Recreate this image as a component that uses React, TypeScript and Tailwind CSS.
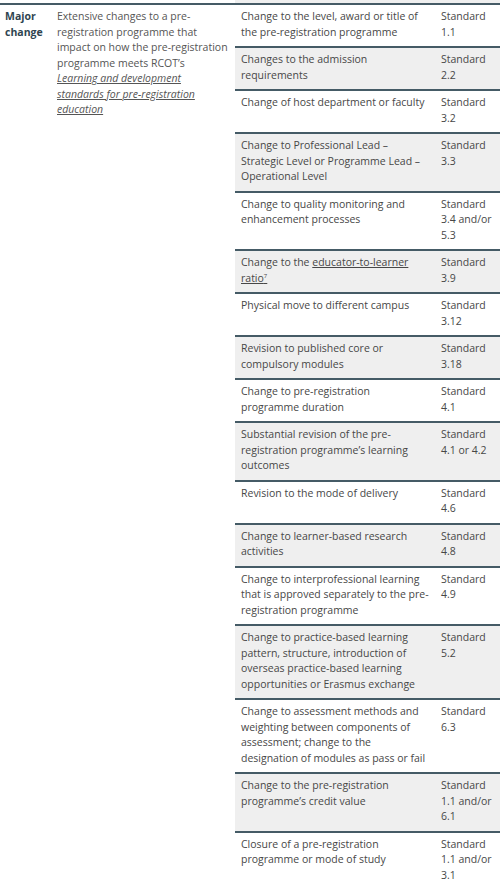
const rows: { change: React.ReactNode; std: string[] }[] = [
  { change: "Change to the level, award or title of the pre-registration programme", std: ["Standard", "1.1"] },
  { change: "Changes to the admission requirements", std: ["Standard", "2.2"] },
  { change: "Change of host department or faculty", std: ["Standard", "3.2"] },
  {
    change: "Change to Professional Lead – Strategic Level or Programme Lead – Operational Level",
    std: ["Standard", "3.3"],
  },
  { change: "Change to quality monitoring and enhancement processes", std: ["Standard", "3.4 and/or", "5.3"] },
  {
    change: (
      <>
        Change to the{" "}
        <span className="underline">
          educator-to-learner ratio<span className="align-super text-[6px] leading-none">7</span>
        </span>
      </>
    ),
    std: ["Standard", "3.9"],
  },
  { change: "Physical move to different campus", std: ["Standard", "3.12"] },
  { change: "Revision to published core or compulsory modules", std: ["Standard", "3.18"] },
  {
    change: (
      <>
        Change to pre-registration
        <br />
        programme duration
      </>
    ),
    std: ["Standard", "4.1"],
  },
  {
    change: "Substantial revision of the pre-registration programme’s learning outcomes",
    std: ["Standard", "4.1 or 4.2"],
  },
  { change: "Revision to the mode of delivery", std: ["Standard", "4.6"] },
  { change: "Change to learner-based research activities", std: ["Standard", "4.8"] },
  {
    change: "Change to interprofessional learning that is approved separately to the pre-registration programme",
    std: ["Standard", "4.9"],
  },
  {
    change:
      "Change to practice-based learning pattern, structure, introduction of overseas practice-based learning opportunities or Erasmus exchange",
    std: ["Standard", "5.2"],
  },
  {
    change: (
      <>
        Change to assessment methods and weighting between components of assessment; change to the
        <br />
        designation of modules as pass or fail
      </>
    ),
    std: ["Standard", "6.3"],
  },
  { change: "Change to the pre-registration programme’s credit value", std: ["Standard", "1.1 and/or", "6.1"] },
  { change: "Closure of a pre-registration programme or mode of study", std: ["Standard", "1.1 and/or", "3.1"] },
];

export default function App() {
  return (
    <div
      className="w-[500px] h-[887px] overflow-hidden bg-white text-[10.5px] leading-[15.5px] text-[#474747]"
      style={{ fontFamily: '"Open Sans", "Noto Sans", sans-serif' }}
    >
      <div className="flex h-[3px]">
        <div className="w-[235px]" />
        <div className="flex-1 bg-[#efefef]" />
      </div>
      <div className="flex border-t-2 border-[#455b66]">
        <div className="w-[52px] shrink-0 pl-[5px] pt-[4px] font-bold text-[#2f4450]">
          Major change
        </div>
        <div className="w-[183px] shrink-0 pl-[5px] pr-[4px] pt-[4px] text-[#555]">
          Extensive changes to a pre-registration programme that impact on how the pre-registration
          programme meets RCOT’s
          <br />
          <span className="italic underline">
            Learning and development
            <br />
            standards for pre-registration
            <br />
            education
          </span>
        </div>
        <div className="flex-1">
          {rows.map((r, i) => (
            <div
              key={i}
              className={
                "flex pt-[4px] pb-[6px] " +
                (i > 0 ? "border-t-2 border-[#455b66] " : "") +
                (i % 2 === 1 ? "bg-[#efefef]" : "bg-white")
              }
            >
              <div className="w-[201px] shrink-0 pl-[6px] pr-[4px]">{r.change}</div>
              <div className="flex-1 pl-[5px]">
                {r.std.map((s) => (
                  <div key={s}>{s}</div>
                ))}
              </div>
            </div>
          ))}
        </div>
      </div>
    </div>
  );
}
